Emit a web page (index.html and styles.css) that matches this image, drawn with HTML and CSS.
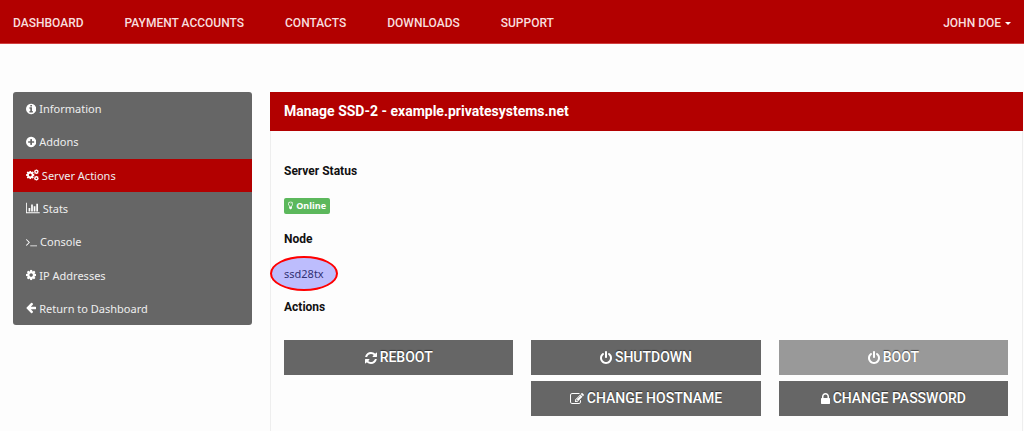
FILE: index.html
```html
<!DOCTYPE html>
<html lang="en">
<head>
  <meta charset="UTF-8">
  <meta name="viewport" content="width=device-width, initial-scale=1.0">
  <title>Manage SSD-2</title>
  <link rel="stylesheet" href="styles.css">
</head>
<body>

  <!-- icon shapes used more than once -->
  <svg class="sprite" aria-hidden="true">
    <symbol id="cog" viewBox="128 128 1536 1536">
      <path d="M1152 896q0-106-75-181t-181-75-181 75-75 181 75 181 181 75 181-75 75-181zm512-109v222q0 12-8 23t-20 13l-185 28q-19 54-39 91 35 50 107 138 10 12 10 25t-9 23q-27 37-99 108t-94 71q-12 0-26-9l-138-108q-44 23-91 38-16 136-29 186-7 28-36 28h-222q-14 0-24.5-8.5t-11.5-21.5l-28-184q-49-16-90-37l-141 107q-10 9-25 9-14 0-25-11-126-114-165-168-7-10-7-23 0-12 8-23 15-21 51-66.5t54-70.5q-27-50-41-99l-183-27q-13-2-21-12.5t-8-23.5v-222q0-12 8-23t19-13l186-28q14-46 39-92-40-57-107-138-10-12-10-24 0-10 9-23 26-36 98.5-107.5t94.5-71.5q13 0 26 10l138 107q44-23 91-38 16-136 29-186 7-28 36-28h222q14 0 24.5 8.5t11.5 21.5l28 184q49 16 90 37l142-107q9-9 24-9 13 0 25 10 129 119 165 170 7 8 7 22 0 12-8 23-15 21-51 66.5t-54 70.5q26 50 41 98l183 28q13 2 21 12.5t8 23.5z"/>
    </symbol>
    <symbol id="power" viewBox="128 0 1536 1792">
      <path d="M1664 896q0 156-61 298t-164 245-245 164-298 61-298-61-245-164-164-245-61-298q0-182 80.5-343t226.5-270q43-32 95.5-25t83.5 50q32 42 24.5 94.5t-49.5 84.5q-98 74-151.5 181t-53.5 228q0 104 40.5 198.5t109.5 163.5 163.5 109.5 198.5 40.5 198.5-40.5 163.5-109.5 109.5-163.5 40.5-198.5q0-121-53.5-228t-151.5-181q-42-32-49.5-84.5t24.5-94.5q31-43 84-50t95 25q146 109 226.5 270t80.5 343zm-640-768v640q0 52-38 90t-90 38-90-38-38-90v-640q0-52 38-90t90-38 90 38 38 90z"/>
    </symbol>
  </svg>

  <nav class="navbar">
    <a href="#">Dashboard</a>
    <a href="#">Payment Accounts</a>
    <a href="#">Contacts</a>
    <a href="#">Downloads</a>
    <a href="#">Support</a>
    <a class="right" href="#">John Doe <span class="caret"></span></a>
  </nav>

  <div class="container">
    <aside>
      <ul class="side-menu">
        <li><a href="#">
          <svg class="icon" viewBox="128 0 1536 1792"><path d="M1152 1376v-160q0-14-9-23t-23-9h-96v-512q0-14-9-23t-23-9h-320q-14 0-23 9t-9 23v160q0 14 9 23t23 9h96v320h-96q-14 0-23 9t-9 23v160q0 14 9 23t23 9h448q14 0 23-9t9-23zm-128-896v-160q0-14-9-23t-23-9h-192q-14 0-23 9t-9 23v160q0 14 9 23t23 9h192q14 0 23-9t9-23zm640 416q0 209-103 385.5t-279.5 279.5-385.5 103-385.5-103-279.5-279.5-103-385.5 103-385.5 279.5-279.5 385.5-103 385.5 103 279.5 279.5 103 385.5z"/></svg>
          Information</a></li>
        <li><a href="#">
          <svg class="icon" viewBox="128 0 1536 1792"><path d="M1344 960v-128q0-26-19-45t-45-19h-256v-256q0-26-19-45t-45-19h-128q-26 0-45 19t-19 45v256h-256q-26 0-45 19t-19 45v128q0 26 19 45t45 19h256v256q0 26 19 45t45 19h128q26 0 45-19t19-45v-256h256q26 0 45-19t19-45zm320-64q0 209-103 385.5t-279.5 279.5-385.5 103-385.5-103-279.5-279.5-103-385.5 103-385.5 279.5-279.5 385.5-103 385.5 103 279.5 279.5 103 385.5z"/></svg>
          Addons</a></li>
        <li><a class="active" href="#">
          <svg class="icon" viewBox="0 0 1920 1792">
            <use href="#cog" x="0" y="256" width="1280" height="1280"/>
            <use href="#cog" x="1180" y="40" width="740" height="740"/>
            <use href="#cog" x="1180" y="1010" width="740" height="740"/>
          </svg>
          Server Actions</a></li>
        <li><a href="#">
          <svg class="icon" viewBox="0 0 2048 1792"><path d="M640 896v512h-256v-512h256zm384-512v1024h-256v-1024h256zm1024 1152v128h-2048v-1536h128v1408h1920zm-640-896v768h-256v-768h256zm384-384v1152h-256v-1152h256z"/></svg>
          Stats</a></li>
        <li><a href="#">
          <svg class="icon" viewBox="77 0 1651 1792"><path d="M649 983l-466 466q-10 10-23 10t-23-10l-50-50q-10-10-10-23t10-23l393-393-393-393q-10-10-10-23t10-23l50-50q10-10 23-10t23 10l466 466q10 10 10 23t-10 23zm1079 457v64q0 14-9 23t-23 9h-960q-14 0-23-9t-9-23v-64q0-14 9-23t23-9h960q14 0 23 9t9 23z"/></svg>
          Console</a></li>
        <li><a href="#">
          <svg class="icon" viewBox="128 0 1536 1792"><use href="#cog" x="128" y="128" width="1536" height="1536"/></svg>
          IP Addresses</a></li>
        <li><a href="#">
          <svg class="icon" viewBox="128 64 1536 1792"><path d="M1664 896v128q0 53-32.5 90.5t-84.5 37.5h-704l293 294q38 36 38 90t-38 90l-75 76q-37 37-90 37-52 0-91-37l-651-652q-37-37-37-90 0-52 37-91l651-650q38-38 91-38 52 0 90 38l75 74q38 38 38 91t-38 91l-293 293h704q52 0 84.5 37.5t32.5 90.5z"/></svg>
          Return to Dashboard</a></li>
      </ul>
    </aside>

    <main class="panel">
      <h1>Manage SSD-2 - example.privatesystems.net</h1>
      <div class="panel-body">
        <h2>Server Status</h2>
        <p><span class="label">
          <svg class="icon" viewBox="384 0 1024 1792"><path d="M1120 576q0 13-9.5 22.5t-22.5 9.5-22.5-9.5-9.5-22.5q0-46-54-71t-106-25q-13 0-22.5-9.5t-9.5-22.5 9.5-22.5 22.5-9.5q50 0 99.5 16t87 54 37.5 90zm160 0q0-72-34.5-134t-90-101.5-123-62-136.5-22.5-136.5 22.5-123 62-90 101.5-34.5 134q0 101 68 180 10 11 30.5 33t30.5 33q128 153 141 298h228q13-145 141-298 10-11 30.5-33t30.5-33q68-79 68-180zm128 0q0 155-103 268-45 49-74.5 87t-59.5 95.5-34 107.5q47 28 47 82 0 37-25 64 25 27 25 64 0 52-45 81 13 23 13 47 0 46-31.5 71t-77.5 25q-20 44-60 70t-87 26-87-26-60-70q-46 0-77.5-25t-31.5-71q0-24 13-47-45-29-45-81 0-37 25-64-25-27-25-64 0-54 47-82-4-50-34-107.5t-59.5-95.5-74.5-87q-103-113-103-268 0-99 44.5-184.5t117-142 164-89 186.5-32.5 186.5 32.5 164 89 117 142 44.5 184.5z"/></svg>
          Online</span></p>
        <h2>Node</h2>
        <p><span class="node">ssd28tx</span></p>
        <h2>Actions</h2>
        <div class="actions">
          <div class="action-col">
            <button type="button">
              <svg class="icon" viewBox="128 0 1536 1792"><path d="M1639 1056q0 5-1 7-64 268-268 434.5t-478 166.5q-146 0-282.5-55t-243.5-157l-129 129q-19 19-45 19t-45-19-19-45v-448q0-26 19-45t45-19h448q26 0 45 19t19 45-19 45l-137 137q71 66 161 102t187 36q134 0 250-65t186-179q11-17 53-117 8-23 30-23h192q13 0 22.5 9.5t9.5 22.5zm25-800v448q0 26-19 45t-45 19h-448q-26 0-45-19t-19-45 19-45l138-138q-148-137-349-137-134 0-250 65t-186 179q-11 17-53 117-8 23-30 23h-199q-13 0-22.5-9.5t-9.5-22.5v-7q65-268 270-434.5t480-166.5q146 0 284 55.5t245 156.5l130-129q19-19 45-19t45 19 19 45z"/></svg>
              Reboot</button>
          </div>
          <div class="action-col">
            <button type="button">
              <svg class="icon" viewBox="0 0 1536 1792"><use href="#power" width="1536" height="1792"/></svg>
              Shutdown</button>
            <button type="button">
              <svg class="icon" viewBox="0 0 1792 1792"><path d="M888 1184l116-116-152-152-116 116v56h96v96h56zm440-720q-16-16-33 1l-350 350q-17 17-1 33t33-1l350-350q17-17 1-33zm80 594v190q0 119-84.5 203.5t-203.5 84.5h-832q-119 0-203.5-84.5t-84.5-203.5v-832q0-119 84.5-203.5t203.5-84.5h832q63 0 117 25 15 7 18 23 3 17-9 29l-49 49q-14 14-32 8-23-6-45-6h-832q-66 0-113 47t-47 113v832q0 66 47 113t113 47h832q66 0 113-47t47-113v-126q0-13 9-22l64-64q15-15 35-7t20 29zm-96-738l288 288-672 672h-288v-288zm444 132l-92 92-288-288 92-92q28-28 68-28t68 28l152 152q28 28 28 68t-28 68z"/></svg>
              Change Hostname</button>
          </div>
          <div class="action-col">
            <button type="button" disabled>
              <svg class="icon" viewBox="0 0 1536 1792"><use href="#power" width="1536" height="1792"/></svg>
              Boot</button>
            <button type="button">
              <svg class="icon" viewBox="320 0 1152 1792"><path d="M640 768h512v-192q0-106-75-181t-181-75-181 75-75 181v192zm832 96v576q0 40-28 68t-68 28h-960q-40 0-68-28t-28-68v-576q0-40 28-68t68-28h32v-192q0-184 132-316t316-132 316 132 132 316v192h32q40 0 68 28t28 68z"/></svg>
              Change Password</button>
          </div>
        </div>
      </div>
    </main>
  </div>

</body>
</html>
```
FILE: styles.css
```css
* {
  box-sizing: border-box;
}

body {
  display: flex;
  flex-direction: column;
  min-height: 100vh;
  margin: 0;
  background-color: #fdfdfd;
  color: #444;
  font-family: "Noto Sans", sans-serif;
  font-size: 11px;
  line-height: 17px;
}

.sprite {
  display: none;
}

.icon {
  height: 12px;
  fill: currentColor;
}

.navbar {
  display: flex;
  gap: 41px;
  padding: 15px 13px 11px;
  background-color: #b20000;
  border-bottom: 1px solid #d04040;
}

.navbar a {
  color: #f8dede;
  font-family: Roboto, sans-serif;
  font-size: 12px;
  font-weight: 500;
  line-height: 17px;
  text-decoration: none;
  text-transform: uppercase;
}

.navbar a.right {
  margin-left: auto;
}

.caret {
  display: inline-block;
  margin-left: 1px;
  border-top: 3px solid #fff;
  border-right: 3px solid transparent;
  border-left: 3px solid transparent;
  vertical-align: middle;
}

.container {
  display: grid;
  flex: 1;
  grid-template-columns: 239px 1fr;
  gap: 18px;
  padding: 48px 1px 0 13px;
}

.side-menu {
  display: grid;
  grid-auto-rows: 1fr;
  min-height: 233px;
  margin: 0;
  padding: 0;
  overflow: hidden;
  background-color: #666;
  border-radius: 3px;
  list-style: none;
}

.side-menu a {
  display: flex;
  align-items: center;
  gap: 3px;
  height: 100%;
  padding: 0 13px;
  color: #eee;
  text-decoration: none;
}

.side-menu a.active {
  background-color: #b20000;
}

.side-menu .icon {
  color: #fff;
}

.panel {
  border: 1px solid #eee;
  border-width: 0 1px;
}

h1,
h2 {
  margin: 0;
  font-family: Roboto, sans-serif;
  font-weight: 700;
}

h1 {
  margin: 0 -1px;
  padding: 11px 14px;
  background-color: #b20000;
  color: #fff;
  font-size: 14px;
  line-height: 17px;
}

.panel-body {
  padding: 32px 14px 14px 13px;
}

h2 {
  color: #111;
  font-size: 12px;
  line-height: 17px;
}

p {
  margin: 17px 0;
}

.label {
  display: inline-flex;
  align-items: center;
  gap: 3px;
  padding: 0 4px;
  background-color: #5cb85c;
  border-radius: 2px;
  color: #fff;
  font-family: "Open Sans", sans-serif;
  font-size: 9px;
  font-weight: 700;
  line-height: 16px;
}

.label .icon {
  height: 9px;
}

.node {
  position: relative;
}

/* highlight ring around the node name */
.node::after {
  content: "";
  position: absolute;
  inset: -10px -14px;
  background-color: rgba(0, 0, 255, 0.25);
  border: 2px solid #f00;
  border-radius: 50%;
}

.actions {
  display: grid;
  grid-template-columns: repeat(3, 1fr);
  gap: 18px;
  margin-top: 24px;
}

.action-col {
  display: flex;
  flex-direction: column;
  gap: 6px;
}

button {
  display: flex;
  align-items: center;
  justify-content: center;
  gap: 3px;
  padding: 9px;
  background-color: #666;
  border: none;
  color: #fff;
  font-family: Roboto, sans-serif;
  font-size: 14px;
  font-weight: 500;
  line-height: 17px;
  text-shadow: 0 -1px 1px rgba(0, 0, 0, 0.5);
  text-transform: uppercase;
  cursor: pointer;
}

button .icon {
  height: 14px;
}

button:disabled {
  background-color: #999;
  cursor: default;
}
```
